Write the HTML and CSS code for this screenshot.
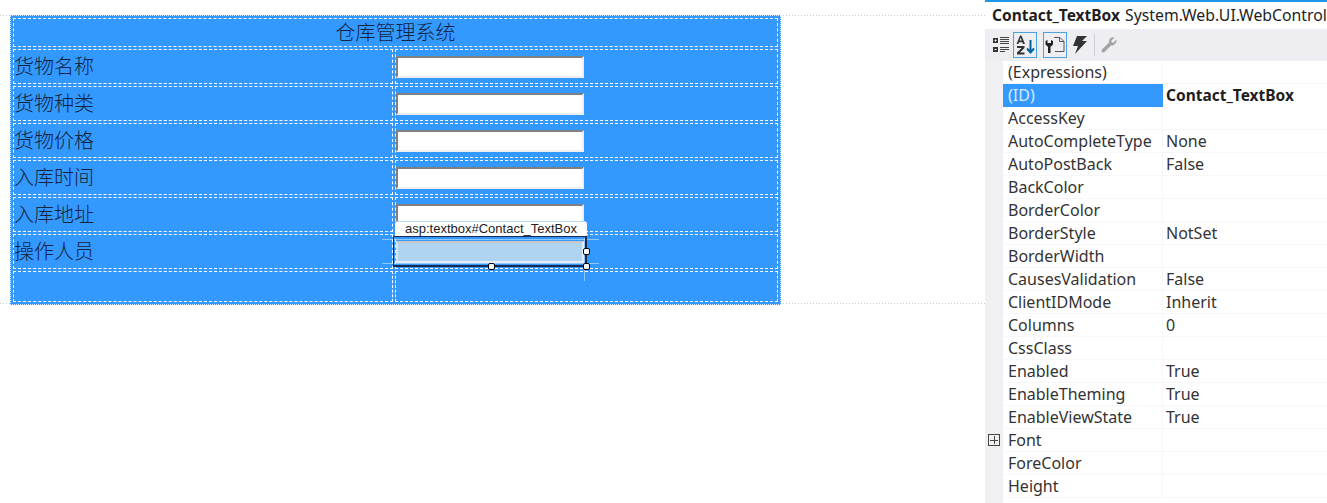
FILE: index.html
```html
<!DOCTYPE html>
<html lang="zh-CN">
<head>
    <meta charset="UTF-8">
    <title>仓库管理系统</title>
    <link rel="stylesheet" href="styles.css">
</head>
<body>
    <div class="design">
        <table class="stock">
            <colgroup><col class="col-label"><col></colgroup>
            <tr><td class="title" colspan="2">仓库管理系统</td></tr>
            <tr><td class="label">货物名称</td><td class="field"><input class="box" type="text"></td></tr>
            <tr><td class="label">货物种类</td><td class="field"><input class="box" type="text"></td></tr>
            <tr><td class="label">货物价格</td><td class="field"><input class="box" type="text"></td></tr>
            <tr><td class="label">入库时间</td><td class="field"><input class="box" type="text"></td></tr>
            <tr><td class="label">入库地址</td><td class="field"><input class="box" type="text"></td></tr>
            <tr>
                <td class="label">操作人员</td>
                <td class="field picked">
                    <input class="box box-picked" type="text">
                    <span class="guide guide-top"></span>
                    <span class="guide guide-low"></span>
                    <span class="guide guide-side"></span>
                    <div class="tag">asp:textbox#Contact_TextBox</div>
                    <div class="frame">
                        <span class="grip grip-right"></span>
                        <span class="grip grip-bottom"></span>
                        <span class="grip grip-corner"></span>
                    </div>
                </td>
            </tr>
            <tr class="last"><td class="label"></td><td class="field"></td></tr>
        </table>
    </div>

    <div class="props">
        <div class="props-head"><b>Contact_TextBox</b> <span class="props-type">System.Web.UI.WebControl</span></div>
        <div class="toolbar">
            <span class="tool">
                <svg width="18" height="18" viewBox="0 0 18 18">
                    <path d="M1 2h5v5H1zM1 11h5v5H1z" fill="#333"/>
                    <path d="M2.500 4.500h2M3.500 3.500v2M2.500 13.500h2" stroke="#fff" fill="none"/>
                    <path d="M8 1.500h9M8 3.500h9M8 5.500h9M8 7.500h9M8 11.500h9M8 13.500h9M8 15.500h5" stroke="#444" fill="none"/>
                </svg>
            </span>
            <span class="tool tool-on tool-az">
                <svg width="22" height="22" viewBox="0 0 22 22">
                    <path d="M2.500 10L6 1.500h1.500L11 10H9l-.6-1.700H5L4.500 10zM5.600 6.500h2.200L6.700 3.700z" fill="#333"/>
                    <path d="M3 12h7.500v2L6 18.500h4.500V20.500H3v-2L7.500 14H3z" fill="#333"/>
                    <path d="M16.500 6v12M13 14.500l3.500 4 3.500-4" stroke="#00639c" stroke-width="2" fill="none"/>
                </svg>
            </span>
            <span class="tool tool-on tool-gap">
                <svg width="22" height="22" viewBox="0 0 22 22">
                    <path d="M10 3.500h6l4 4v10h-9" stroke="#555" fill="none"/>
                    <path d="M15.500 3.500v4h4.500" stroke="#555" fill="none"/>
                    <path d="M1.500 7v3.500L3.500 12.500h.5V19h2.500v-6.500H7l2-2V7L7 6v3H3.500V6z" fill="#222"/>
                </svg>
            </span>
            <span class="tool tool-bolt">
                <svg width="16" height="20" viewBox="0 0 16 20">
                    <path d="M5 1h10l-5 5h5L3 19l3-8H1z" fill="#333"/>
                </svg>
            </span>
            <span class="tool-line"></span>
            <span class="tool">
                <svg width="18" height="18" viewBox="0 0 18 18">
                    <path d="M16.500 3.500L13 7l-2-2 3.500-3.500C11.500.5 8.500 3 9 6.500L2 13.500 1.500 16l2.500.5 7-7c3.500.5 6-3 5.500-6z" fill="#a3a3a3"/>
                </svg>
            </span>
        </div>
        <div class="grid">
            <div class="row"><div class="name">(Expressions)</div><div class="value"></div></div>
            <div class="row row-on"><div class="name">(ID)</div><div class="value value-bold">Contact_TextBox</div></div>
            <div class="row"><div class="name">AccessKey</div><div class="value"></div></div>
            <div class="row"><div class="name">AutoCompleteType</div><div class="value">None</div></div>
            <div class="row"><div class="name">AutoPostBack</div><div class="value">False</div></div>
            <div class="row"><div class="name">BackColor</div><div class="value"></div></div>
            <div class="row"><div class="name">BorderColor</div><div class="value"></div></div>
            <div class="row"><div class="name">BorderStyle</div><div class="value">NotSet</div></div>
            <div class="row"><div class="name">BorderWidth</div><div class="value"></div></div>
            <div class="row"><div class="name">CausesValidation</div><div class="value">False</div></div>
            <div class="row"><div class="name">ClientIDMode</div><div class="value">Inherit</div></div>
            <div class="row"><div class="name">Columns</div><div class="value">0</div></div>
            <div class="row"><div class="name">CssClass</div><div class="value"></div></div>
            <div class="row"><div class="name">Enabled</div><div class="value">True</div></div>
            <div class="row"><div class="name">EnableTheming</div><div class="value">True</div></div>
            <div class="row"><div class="name">EnableViewState</div><div class="value">True</div></div>
            <div class="row"><span class="plus"></span><div class="name">Font</div><div class="value"></div></div>
            <div class="row"><div class="name">ForeColor</div><div class="value"></div></div>
            <div class="row"><div class="name">Height</div><div class="value"></div></div>
        </div>
    </div>
</body>
</html>
```

FILE: styles.css
```css
html, body {
    margin: 0;
    height: 503px;
    overflow: hidden;
    background-color: #fff;
}
body {
    display: flex;
    font-family: 'Noto Sans CJK SC', 'Noto Sans', sans-serif;
}
.design {
    width: 985px;
    flex-shrink: 0;
    padding: 15px 0 0 10px;
    box-sizing: border-box;
    background-image: linear-gradient(to right, #ccc 1px, transparent 1px), linear-gradient(to right, #ccc 1px, transparent 1px);
    background-size: 3px 1px;
    background-repeat: repeat-x;
    background-position: 0 15px, 0 303px;
}

/* 表格 */
.stock {
    width: 771px;
    table-layout: fixed;
    border-collapse: separate;
    border-spacing: 2px;
    border: 1px dotted #cfe6ff;
    background-color: #3399ff;
    color: #14233f;
    font-size: 20px;
    font-weight: 300;
}
.col-label {
    width: 380px;
}
.stock td {
    border: 1px dashed #fff;
    padding: 0;
    height: 33px;
    line-height: 26px;
}
.stock .title {
    height: 26px;
    padding-bottom: 1px;
    text-align: center;
}
.stock .last td {
    height: 27px;
}
.stock .label {
    height: 31px;
    padding-bottom: 2px;
}
.stock .field {
    position: relative;
    vertical-align: top;
    padding-top: 6px;
    box-sizing: border-box;
}
.box {
    display: block;
    width: 188px;
    height: 22px;
    margin: 0;
    padding: 0;
    box-sizing: border-box;
    border: 2px solid #808080;
    border-right-color: #eee;
    border-bottom-color: #eee;
    background-color: #fff;
}
.box-picked {
    background-color: #b0d3f0;
    border-color: #c6c6c6 #e2edf6 #e2edf6 #d8e6f2;
}

/* 选中的控件 */
.tag {
    position: absolute;
    left: -1px;
    top: -14px;
    width: 192px;
    height: 15px;
    box-sizing: border-box;
    background-color: #fff;
    border-top: 1px solid #bcd9f2;
    border-radius: 3px 3px 0 0;
    color: #222;
    font: 13px/14px 'Liberation Sans', sans-serif;
    font-weight: 400;
    text-align: center;
}
.frame {
    position: absolute;
    left: -3px;
    top: 1px;
    width: 194px;
    height: 31px;
    box-sizing: border-box;
    border: 1px solid #1a2a50;
    border-width: 1px 2px 2px 1px;
}
.grip {
    position: absolute;
    width: 7px;
    height: 7px;
    box-sizing: border-box;
    background-color: #fff;
    border: 1px solid #000;
    border-radius: 2px;
}
.grip-right { right: -5px; top: 11px; }
.grip-bottom { left: 94px; bottom: -5px; }
.grip-corner { right: -5px; bottom: -5px; }
.guide {
    position: absolute;
    background-color: rgba(255, 255, 255, 0.45);
}
.guide-top { left: -14px; top: 4px; width: 217px; height: 1px; }
.guide-low { left: -14px; top: 28px; width: 217px; height: 1px; }
.guide-side { left: 188px; top: 3px; width: 1px; height: 43px; }

/* 属性窗口 */
.props {
    display: flex;
    flex-direction: column;
    flex: 1;
    min-width: 0;
    border-top: 2px solid #1c97ea;
    font-size: 16px;
    font-family: 'Noto Sans', sans-serif;
    color: #333;
    overflow: hidden;
}
.props-head {
    flex-shrink: 0;
    height: 27px;
    padding-left: 7px;
    line-height: 26px;
    white-space: nowrap;
    color: #1e1e1e;
    font-size: 15.500px;
    overflow: hidden;
}
.props-type {
    margin-left: 1px;
    font-size: 15.800px;
}
.toolbar {
    flex-shrink: 0;
    display: flex;
    align-items: center;
    height: 32px;
    padding-left: 5px;
    background-color: #eeeef2;
}
.tool {
    display: flex;
    align-items: center;
    justify-content: center;
    width: 22px;
    height: 26px;
}
.tool-on {
    width: 24px;
    box-sizing: border-box;
    border: 1px solid #4aa3df;
}
.tool-az { margin-left: 1px; }
.tool-gap { margin-left: 6px; }
.tool-bolt { margin-left: 2px; }
.tool-line {
    width: 1px;
    height: 22px;
    margin: 0 3px;
    background-color: #ccced8;
}
.grid {
    flex: 1;
    background-color: #fff;
    background-image: linear-gradient(#f0f0f3, #f0f0f3);
    background-size: 18px 100%;
    background-repeat: no-repeat;
}
.row {
    position: relative;
    display: flex;
    height: 23px;
    margin-left: 18px;
    line-height: 22px;
    box-sizing: border-box;
    border-bottom: 1px solid #f7f7f9;
}
.name {
    width: 160px;
    padding-left: 5px;
    box-sizing: border-box;
    border-right: 1px solid #f7f7f9;
}
.value {
    padding-left: 3px;
    flex: 1;
}
.value-bold {
    font-weight: 700;
    font-size: 15.500px;
    color: #1e1e1e;
}
.row-on {
    border-bottom: none;
}
.row-on .name {
    background-color: #3399ff;
    border-right: none;
    color: #d8e9fb;
}
.plus {
    position: absolute;
    left: -15px;
    top: 5px;
    width: 12px;
    height: 12px;
    box-sizing: border-box;
    border: 1px solid #444;
    background: linear-gradient(#444, #444) center / 8px 1px no-repeat, linear-gradient(#444, #444) center / 1px 8px no-repeat;
}
```
